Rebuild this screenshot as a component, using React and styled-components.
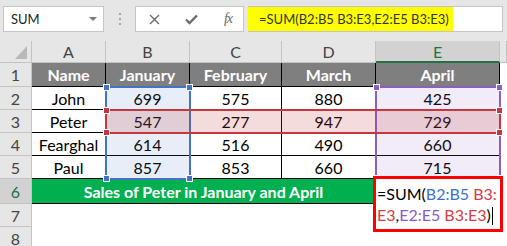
import styled, { createGlobalStyle } from 'styled-components';

const GlobalStyle = createGlobalStyle`
  html, body {
    margin: 0;
    padding: 0;
    background: #ffffff;
  }
  body {
    font-family: Lato, "Liberation Sans", sans-serif;
  }
`;

const COLS = [32, 74, 84, 92, 94, 124];
const ROWS = [22, 24, 23, 23, 23, 23, 25, 23, 23];

const colX = (i) => COLS.slice(0, i).reduce((a, b) => a + b, 0);
const rowY = (i) => ROWS.slice(0, i).reduce((a, b) => a + b, 0);

const data = [
  ['Name', 'January', 'February', 'March', 'April'],
  ['John', '699', '575', '880', '425'],
  ['Peter', '547', '277', '947', '729'],
  ['Fearghal', '614', '516', '490', '660'],
  ['Paul', '857', '853', '660', '715'],
];

const Frame = styled.div`
  width: 507px;
  height: 246px;
  overflow: hidden;
  background: #e6e6e6;
`;

const FormulaBar = styled.div`
  display: flex;
  align-items: flex-start;
  height: 41px;
  padding: 6px 4px 0 3px;
  box-sizing: border-box;
`;

const NameBox = styled.div`
  position: relative;
  width: 101px;
  height: 26px;
  box-sizing: border-box;
  border: 1px solid #c6c6c6;
  background: #fff;
  display: flex;
  align-items: center;
  padding-left: 7px;
  font-size: 13px;
  color: #222;
`;

const Caret = styled.span`
  position: absolute;
  right: 6px;
  top: 10px;
  width: 0;
  height: 0;
  border-left: 4px solid transparent;
  border-right: 4px solid transparent;
  border-top: 4px solid #7a7a7a;
`;

const Grip = styled.div`
  width: 31px;
  height: 26px;
  display: flex;
  flex-direction: column;
  align-items: center;
  justify-content: center;
  gap: 3px;

  span {
    width: 2px;
    height: 2px;
    background: #a6a6a6;
  }
`;

const FxBox = styled.div`
  width: 109px;
  height: 26px;
  box-sizing: border-box;
  border: 1px solid #c6c6c6;
  background: #fff;
  display: flex;
  align-items: center;
  justify-content: space-between;
  padding: 0 11px 0 13px;
`;

const Fx = styled.span`
  font-family: "Liberation Serif", serif;
  font-style: italic;
  font-size: 14px;
  color: #666;
  letter-spacing: -1px;
`;

const Input = styled.div`
  margin-left: 4px;
  flex: 1;
  height: 26px;
  box-sizing: border-box;
  border: 1px solid #c6c6c6;
  border-left: none;
  background: #fff;
  display: flex;
`;

const Highlight = styled.div`
  width: 205px;
  background: #ffff00;
  display: flex;
  align-items: center;
  padding-left: 11px;
  box-sizing: border-box;
  font-size: 13px;
  color: #333;
  white-space: nowrap;
`;

const Sheet = styled.div`
  position: relative;
  display: grid;
  grid-template-columns: ${COLS.map((c) => c + 'px').join(' ')} 1fr;
  grid-template-rows: ${ROWS.map((r) => r + 'px').join(' ')};
  background: #fff;
`;

const Corner = styled.div`
  position: relative;
  background: #e6e6e6;
  border-right: 1px solid #c3c3c3;
  border-bottom: 1px solid #c3c3c3;

  &::after {
    content: '';
    position: absolute;
    right: 4px;
    bottom: 3px;
    width: 0;
    height: 0;
    border-left: 12px solid transparent;
    border-bottom: 13px solid #b9b9b9;
  }
`;

const ColHead = styled.div`
  background: ${(p) => (p.$active ? '#d2d2d2' : '#e6e6e6')};
  color: ${(p) => (p.$active ? '#217346' : '#444')};
  border-right: 1px solid #c3c3c3;
  border-bottom: ${(p) => (p.$active ? '2px solid #217346' : '1px solid #c3c3c3')};
  display: flex;
  align-items: center;
  justify-content: center;
  font-size: 16px;
  padding-bottom: ${(p) => (p.$active ? '0' : '1px')};
`;

const RowHead = styled.div`
  background: ${(p) => (p.$active ? '#d2d2d2' : '#e6e6e6')};
  color: ${(p) => (p.$active ? '#217346' : '#444')};
  border-right: 1px solid #c3c3c3;
  border-bottom: 1px solid #c3c3c3;
  display: flex;
  align-items: center;
  justify-content: center;
  font-size: 16px;
`;

const Cell = styled.div`
  display: flex;
  align-items: center;
  justify-content: center;
  font-size: 16px;
  color: #000;
  border-right: 1px solid #000;
  border-bottom: 1px solid #000;
  white-space: nowrap;
  ${(p) => p.$head && 'background: #7f7f7f; color: #fff; font-weight: 700;'}
`;

const Banner = styled.div`
  grid-column: span 4;
  display: flex;
  align-items: center;
  justify-content: center;
  background: #00b050;
  color: #fff;
  font-weight: 700;
  font-size: 16px;
  border-right: 1px solid #000;
  border-bottom: 1px solid #000;
`;

const Blank = styled.div`
  background: #fff;
`;

const Range = styled.div`
  position: absolute;
  left: ${(p) => p.$x - 1}px;
  top: ${(p) => p.$y - 1}px;
  width: ${(p) => p.$w + 2}px;
  height: ${(p) => p.$h + 2}px;
  box-sizing: border-box;
  border: 2px solid ${(p) => p.$color};
  background: ${(p) => p.$fill};
  pointer-events: none;
`;

const Handle = styled.span`
  position: absolute;
  width: 7px;
  height: 7px;
  box-sizing: border-box;
  background: ${(p) => p.$color};
  border: 1px solid #fff;
  ${(p) => (p.$top ? 'top: -4px;' : 'bottom: -4px;')}
  ${(p) => (p.$left ? 'left: -4px;' : 'right: -4px;')}
`;

const Editor = styled.div`
  position: absolute;
  left: 373px;
  top: 135px;
  width: 130px;
  height: 56px;
  box-sizing: border-box;
  border: 3px solid #ff0000;
  background: #fff;
  padding: 4px 0 0 1px;
  font-size: 16px;
  line-height: 21px;
  color: #000;
  white-space: nowrap;
`;

const Ref = styled.span`
  color: ${(p) => p.$color};
`;

const Cursor = styled.span`
  display: inline-block;
  width: 1px;
  height: 18px;
  background: #000;
  vertical-align: -4px;
  margin-left: 1px;
`;

const BLUE = '#4472c4';
const RED = '#c4373f';
const PURPLE = '#8a5fc0';

const RangeBox = ({ c0, c1, r0, r1, color, fill }) => {
  const x = colX(c0);
  const y = rowY(r0);
  return (
    <Range $x={x} $y={y} $w={colX(c1 + 1) - x} $h={rowY(r1 + 1) - y} $color={color} $fill={fill}>
      <Handle $color={color} $top $left />
      <Handle $color={color} $top />
      <Handle $color={color} $left />
      <Handle $color={color} />
    </Range>
  );
};

const CancelIcon = () => (
  <svg width="11" height="11" viewBox="0 0 11 11">
    <path d="M1 1 L10 10 M10 1 L1 10" stroke="#6b6b6b" strokeWidth="1.4" fill="none" />
  </svg>
);

const CheckIcon = () => (
  <svg width="13" height="11" viewBox="0 0 13 11">
    <path d="M1 5.5 L4.5 9 L12 1.5" stroke="#6b6b6b" strokeWidth="2.4" fill="none" />
  </svg>
);

export default function App() {
  const letters = ['A', 'B', 'C', 'D', 'E'];
  return (
    <Frame>
      <GlobalStyle />
      <FormulaBar>
        <NameBox>
          SUM
          <Caret />
        </NameBox>
        <Grip>
          <span />
          <span />
          <span />
        </Grip>
        <FxBox>
          <CancelIcon />
          <CheckIcon />
          <Fx>fx</Fx>
        </FxBox>
        <Input>
          <Highlight>=SUM(B2:B5 B3:E3,E2:E5 B3:E3)</Highlight>
        </Input>
      </FormulaBar>
      <Sheet>
        <Corner />
        {letters.map((l) => (
          <ColHead key={l} $active={l === 'E'}>
            {l}
          </ColHead>
        ))}
        <ColHead />
        {data.map((row, i) => (
          <>
            <RowHead key={'h' + i}>{i + 1}</RowHead>
            {row.map((v, j) => (
              <Cell key={i + '-' + j} $head={i === 0}>
                {v}
              </Cell>
            ))}
            <Blank key={'b' + i} />
          </>
        ))}
        <RowHead $active>6</RowHead>
        <Banner>Sales of Peter in January and April</Banner>
        <Blank />
        <Blank />
        <RowHead>7</RowHead>
        <Blank />
        <Blank />
        <Blank />
        <Blank />
        <Blank />
        <Blank />
        <RowHead>8</RowHead>
        <Blank />
        <Blank />
        <Blank />
        <Blank />
        <Blank />
        <Blank />

        <RangeBox c0={2} c1={2} r0={2} r1={5} color={BLUE} fill="rgba(68,114,196,0.12)" />
        <RangeBox c0={5} c1={5} r0={2} r1={5} color={PURPLE} fill="rgba(138,95,192,0.12)" />
        <RangeBox c0={2} c1={5} r0={3} r1={3} color={RED} fill="rgba(196,55,63,0.18)" />

        <Editor>
          =SUM(<Ref $color="#3d6fcb">B2:B5</Ref> <Ref $color="#d0404a">B3:</Ref>
          <br />
          <Ref $color="#d0404a">E3</Ref>,<Ref $color="#8a5ac8">E2:E5</Ref> <Ref $color="#d0404a">B3:E3</Ref>)
          <Cursor />
        </Editor>
      </Sheet>
    </Frame>
  );
}
